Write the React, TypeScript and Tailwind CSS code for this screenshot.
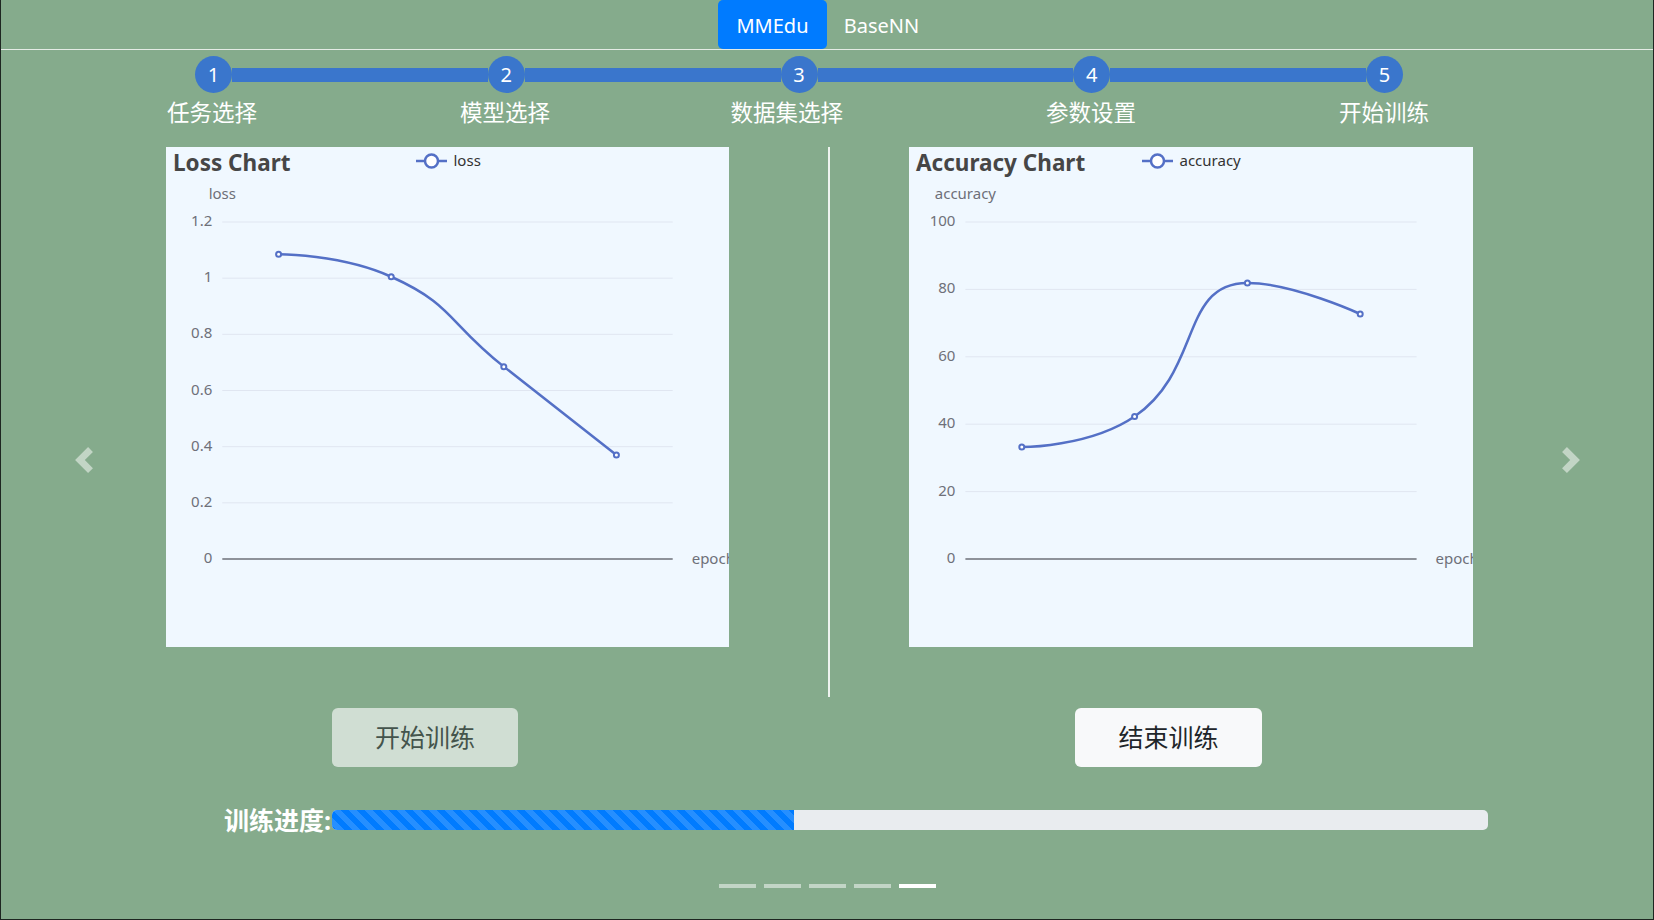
import React from 'react';

type Pt = [number, number];

const LINE = '#5470c6';
const AXIS = '#6e7079';

const clamp = (v: number, a: number, b: number) => Math.min(Math.max(v, Math.min(a, b)), Math.max(a, b));

// echarts-style smoothing: endpoints keep their own control point, control points are
// clipped to the box of their segment so peaks stay on the data points
function smoothPath(pts: Pt[], smooth = 0.5) {
  const cps = pts.map((p, i) => {
    if (i === 0 || i === pts.length - 1) return [p, p] as [Pt, Pt];
    const prev = pts[i - 1];
    const next = pts[i + 1];
    const vx = next[0] - prev[0];
    const vy = next[1] - prev[1];
    const d0 = Math.hypot(p[0] - prev[0], p[1] - prev[1]);
    const d1 = Math.hypot(next[0] - p[0], next[1] - p[1]);
    const r = d1 / (d0 + d1);
    let cout: Pt = [p[0] + vx * smooth * r, p[1] + vy * smooth * r];
    cout = [clamp(cout[0], p[0], next[0]), clamp(cout[1], p[1], next[1])];
    let cin: Pt = [p[0] - ((cout[0] - p[0]) * d0) / d1, p[1] - ((cout[1] - p[1]) * d0) / d1];
    cin = [clamp(cin[0], prev[0], p[0]), clamp(cin[1], prev[1], p[1])];
    cout = [p[0] + ((p[0] - cin[0]) * d1) / d0, p[1] + ((p[1] - cin[1]) * d1) / d0];
    return [cin, cout] as [Pt, Pt];
  });
  let d = `M${pts[0][0]},${pts[0][1]}`;
  for (let i = 1; i < pts.length; i++) {
    const a = cps[i - 1][1];
    const b = cps[i][0];
    d += ` C${a[0]},${a[1]} ${b[0]},${b[1]} ${pts[i][0]},${pts[i][1]}`;
  }
  return d;
}

interface ChartProps {
  title: string;
  name: string;
  width: number;
  max: number;
  ticks: string[];
  values: number[];
  legendX: number;
  className: string;
}

function LineChart({ title, name, width, max, ticks, values, legendX, className }: ChartProps) {
  const left = width * 0.1;
  const right = width * 0.9;
  const top = 75;
  const bottom = 412;
  const band = (right - left) / values.length;
  const step = (bottom - top) / (ticks.length - 1);
  const pts: Pt[] = values.map((v, i) => [left + band * (i + 0.5), bottom - (v / max) * (bottom - top)]);

  return (
    <div className={`h-[500px] shrink-0 overflow-hidden bg-[#f0f8ff] ${className}`}>
      <svg width={width} height={500} className="block" fontFamily="'Noto Sans', 'Noto Sans CJK SC', sans-serif">
        <text x={7} y={24} fontSize={22.5} fontWeight={700} fill="#464646">
          {title}
        </text>

        <line x1={legendX} x2={legendX + 31} y1={14} y2={14} stroke={LINE} strokeWidth={2.5} />
        <circle cx={legendX + 15.5} cy={14} r={6.5} fill="#fff" stroke={LINE} strokeWidth={2.5} />
        <text x={legendX + 37.5} y={13} fontSize={15} fill="#333" dominantBaseline="central">
          {name}
        </text>

        <text x={left} y={46} fontSize={15} fill={AXIS} textAnchor="middle" dominantBaseline="central">
          {name}
        </text>

        {ticks.map((t, i) => {
          const y = bottom - i * step;
          return (
            <g key={t}>
              {i > 0 && <line x1={left} x2={right} y1={y} y2={y} stroke="#e0e6f1" strokeWidth={1} />}
              <text x={left - 10} y={y - 2} fontSize={15} fill={AXIS} textAnchor="end" dominantBaseline="central">
                {t}
              </text>
            </g>
          );
        })}
        <line x1={left} x2={right} y1={bottom} y2={bottom} stroke={AXIS} strokeWidth={1.5} />
        <text x={right + 19} y={bottom - 1} fontSize={15} fill={AXIS} dominantBaseline="central">
          epoch
        </text>

        <path d={smoothPath(pts)} fill="none" stroke={LINE} strokeWidth={2.5} />
        {pts.map(([x, y], i) => (
          <circle key={i} cx={x} cy={y} r={2.5} fill="#fff" stroke={LINE} strokeWidth={2} />
        ))}
      </svg>
    </div>
  );
}

function Chevron({ dir }: { dir: 'prev' | 'next' }) {
  return (
    <svg viewBox="0 0 8 8" className="h-[26px] w-[26px]" fill="#fff" opacity={0.5}>
      <path
        d={
          dir === 'prev'
            ? 'M5.25 0l-4 4 4 4 1.5-1.5L4.25 4l2.5-2.5L5.25 0z'
            : 'M2.75 0l-1.5 1.5L3.75 4l-2.5 2.5L2.75 8l4-4-4-4z'
        }
      />
    </svg>
  );
}

const steps = [
  { n: 1, label: '任务选择', align: 'justify-center' },
  { n: 2, label: '模型选择', align: 'justify-center' },
  { n: 3, label: '数据集选择', align: 'justify-end' },
  { n: 4, label: '参数设置', align: 'justify-center' },
  { n: 5, label: '开始训练', align: 'justify-center' },
];

export default function App() {
  return (
    <div className="h-[920px] w-full overflow-hidden border-x border-b border-[#1e2621] bg-[#85ab8c] font-['Noto_Sans','Noto_Sans_CJK_SC',sans-serif] text-white">
      <div className="flex h-[50px] justify-center border-b border-[#e4ebe5]">
        <div className="flex h-full w-[109px] items-center justify-center rounded-[5px] bg-[#007bff] pt-[2px] text-[20px]">
          MMEdu
        </div>
        <div className="flex h-full w-[109px] items-center justify-center pt-[2px] text-[20px]">BaseNN</div>
      </div>

      <div className="flex">
        <div className="flex w-[165px] shrink-0 justify-center pt-[397px]">
          <Chevron dir="prev" />
        </div>

        <div className="flex flex-1 flex-col">
          <div className="mt-[6px] flex w-[1237px] items-center pl-[29px]">
            {steps.map((s, i) => (
              <React.Fragment key={s.n}>
                {i > 0 && <div className="h-[14px] flex-1 bg-[#3a76cc]" />}
                <div className="flex h-[37px] w-[37px] shrink-0 items-center justify-center rounded-full bg-[#3a76cc] text-[20px] leading-none">
                  {s.n}
                </div>
              </React.Fragment>
            ))}
          </div>

          <div className="mt-[3px] flex w-[1263px] justify-between pl-[1px]">
            {steps.map((s) => (
              <div key={s.n} className={`flex h-[33px] w-[90px] whitespace-nowrap text-[22.5px] leading-[33px] ${s.align}`}>
                {s.label}
              </div>
            ))}
          </div>

          <div className="mt-[18px] flex items-start">
            <LineChart
              title="Loss Chart"
              name="loss"
              width={563}
              className="w-[563px]"
              max={1.2}
              ticks={['0', '0.2', '0.4', '0.6', '0.8', '1', '1.2']}
              values={[1.085, 1.005, 0.685, 0.37]}
              legendX={250}
            />
            <div className="ml-[99px] h-[550px] w-[2px] shrink-0 bg-[#eef3ef]" />
            <LineChart
              title="Accuracy Chart"
              name="accuracy"
              width={564}
              className="ml-[79px] w-[564px]"
              max={100}
              ticks={['0', '20', '40', '60', '80', '100']}
              values={[33.2, 42.3, 81.9, 72.7]}
              legendX={233}
            />
          </div>

          <div className="mt-[11px] flex">
            <button className="ml-[166px] h-[59px] w-[186px] rounded-[6px] bg-[#d0ded3] text-[25px] text-[#44544c]">
              开始训练
            </button>
            <button className="ml-[557px] h-[59px] w-[187px] rounded-[6px] bg-[#f8f9fa] text-[25px] text-[#212529]">
              结束训练
            </button>
          </div>

          <div className="mt-[34px] flex h-[38px] items-center">
            <div className="ml-[58px] w-[108px] whitespace-nowrap text-[25px] font-bold leading-none">训练进度:</div>
            <div className="flex h-[20px] w-[1156px] overflow-hidden rounded-[5px] bg-[#e9ecef]">
              <div className="h-full w-[40%] bg-[#007bff] bg-[linear-gradient(45deg,rgba(255,255,255,.15)_25%,transparent_25%,transparent_50%,rgba(255,255,255,.15)_50%,rgba(255,255,255,.15)_75%,transparent_75%,transparent)] bg-[length:16px_16px]" />
            </div>
          </div>

          <div className="mt-[45px] flex justify-center gap-[8px]">
            {[0, 1, 2, 3, 4].map((i) => (
              <div key={i} className={`h-[4px] w-[37px] ${i === 4 ? 'bg-white' : 'bg-white/50'}`} />
            ))}
          </div>
        </div>

        <div className="flex w-[164px] shrink-0 justify-center pt-[397px]">
          <Chevron dir="next" />
        </div>
      </div>
    </div>
  );
}
